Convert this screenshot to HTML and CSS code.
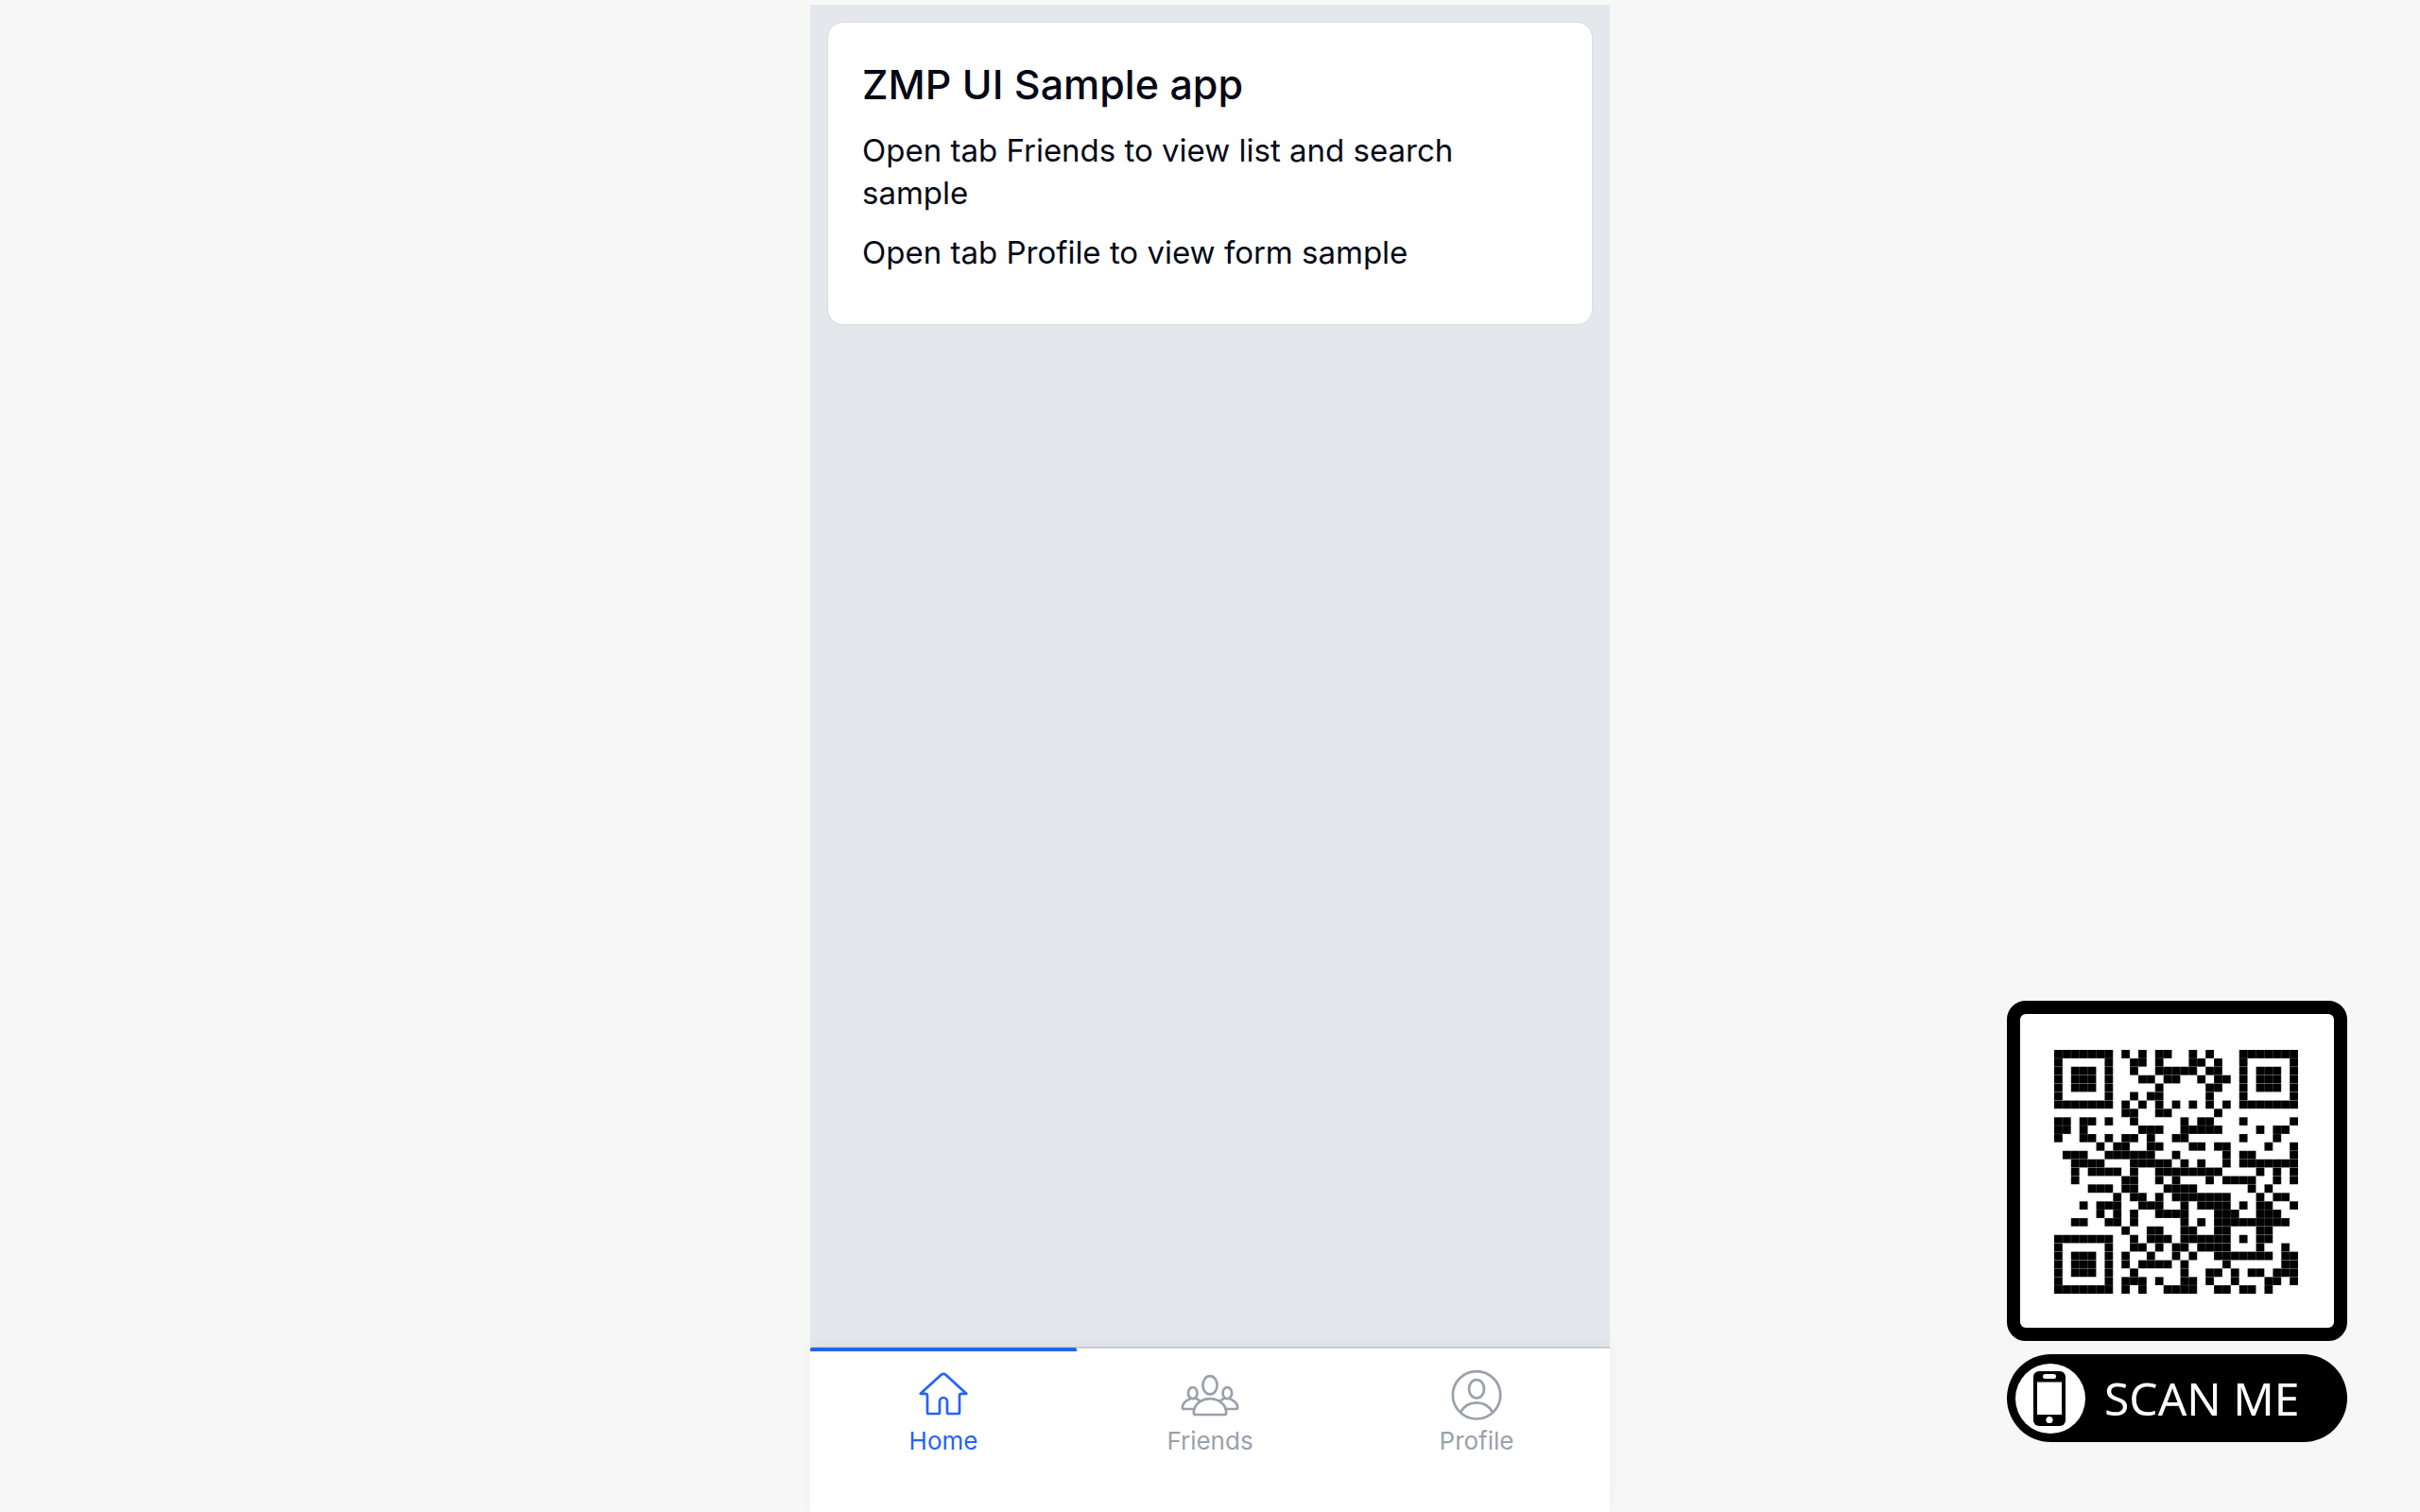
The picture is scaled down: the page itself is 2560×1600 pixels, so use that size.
FILE: index.html
```html
<!DOCTYPE html>
<html lang="en">
<head>
<meta charset="utf-8">
<meta name="viewport" content="width=device-width, initial-scale=1">
<title>ZMP UI Sample app</title>
<link rel="stylesheet" href="styles.css">
</head>
<body>
<div class="app">
  <main class="page">
    <section class="card">
      <h1 class="card-title">ZMP UI Sample app</h1>
      <p class="card-text">Open tab Friends to view list and search sample</p>
      <p class="card-text">Open tab Profile to view form sample</p>
    </section>
  </main>
  <nav class="tabs">
    <a class="tab tab-active" href="#home">
      <svg class="tab-icon" viewBox="0 0 60 60" aria-hidden="true"><path d="M27.6 8.8Q30 6.800 32.400 8.800L54.300 28.800H49Q47 28.800 47 30.800V48.500Q47 50 45.500 50H35.500Q34 50 34 48.500V37A4 4 0 0 0 26 37V48.500Q26 50 24.500 50H14.500Q13 50 13 48.500V30.800Q13 28.800 11 28.800H5.700Z"/></svg>
      <span>Home</span>
    </a>
    <a class="tab" href="#friends">
      <svg class="tab-icon" viewBox="0 0 60 60" aria-hidden="true"><ellipse cx="30" cy="19.8" rx="7.6" ry="9.6"/><path d="M12.8 49C12.8 41 20 34.2 30 34.2S47.2 41 47.2 49Q47.2 51 45.4 51H14.6Q12.8 51 12.8 49Z"/><ellipse cx="11.7" cy="28.2" rx="4.8" ry="6"/><ellipse cx="48.3" cy="28.2" rx="4.8" ry="6"/><path d="M8.5 34.5C4 36 .8 40 .8 43.2Q.8 45 2.6 45H13.5M14.5 33.5L18.5 35.8M51.5 34.5C56 36 59.2 40 59.2 43.2Q59.2 45 57.4 45H46.5M45.5 33.5L41.5 35.8"/></svg>
      <span>Friends</span>
    </a>
    <a class="tab" href="#profile">
      <svg class="tab-icon" viewBox="0 0 60 60" aria-hidden="true"><circle cx="30" cy="30.3" r="25.2"/><ellipse cx="30" cy="23.8" rx="8" ry="9.7"/><path d="M13.3 48C17 41.5 23 38.3 30 38.3S43 41.5 46.7 48"/></svg>
      <span>Profile</span>
    </a>
  </nav>
</div>

<aside class="scan">
  <div class="qr-frame">
    <svg class="qr" viewBox="0 0 29 29" role="img" aria-label="QR code">
      <g class="qr-modules" transform="translate(0 .5)">
        <path d="M0 0h7M8 0h1M10 0h1M12 0h2M16 0h1M18 0h1M22 0h7"/>
        <path d="M0 1h1M6 1h1M9 1h2M12 1h1M16 1h2M19 1h1M22 1h1M28 1h1"/>
        <path d="M0 2h1M2 2h3M6 2h1M9 2h1M12 2h5M18 2h2M22 2h1M24 2h3M28 2h1"/>
        <path d="M0 3h1M2 3h3M6 3h1M10 3h2M13 3h2M17 3h1M19 3h2M22 3h1M24 3h3M28 3h1"/>
        <path d="M0 4h1M2 4h3M6 4h1M12 4h1M18 4h2M22 4h1M24 4h3M28 4h1"/>
        <path d="M0 5h1M6 5h1M9 5h1M11 5h2M18 5h1M22 5h1M28 5h1"/>
        <path d="M0 6h7M8 6h1M10 6h1M12 6h1M14 6h1M16 6h1M18 6h1M20 6h1M22 6h7"/>
        <path d="M8 7h2M12 7h2M19 7h1"/>
        <path d="M0 8h2M3 8h2M6 8h1M9 8h1M15 8h1M17 8h2M22 8h1M28 8h1"/>
        <path d="M0 9h2M3 9h1M10 9h3M15 9h5M24 9h1M26 9h2"/>
        <path d="M0 10h1M3 10h2M6 10h1M8 10h2M11 10h1M14 10h2M22 10h1M26 10h1"/>
        <path d="M5 11h1M7 11h2M11 11h2M16 11h2M19 11h2M25 11h1M28 11h1"/>
        <path d="M1 12h3M6 12h6M14 12h1M20 12h1M22 12h2M28 12h1"/>
        <path d="M2 13h4M9 13h5M15 13h1M17 13h1M20 13h1M22 13h7"/>
        <path d="M2 14h1M4 14h4M9 14h1M12 14h8M24 14h1M26 14h1M28 14h1"/>
        <path d="M2 15h1M8 15h2M12 15h1M14 15h1M18 15h1M20 15h4M26 15h1M28 15h1"/>
        <path d="M4 16h3M8 16h2M13 16h4M23 16h1M25 16h1"/>
        <path d="M7 17h1M9 17h2M12 17h1M14 17h7M24 17h1M26 17h2"/>
        <path d="M3 18h1M5 18h3M10 18h3M15 18h1M17 18h4M22 18h1M24 18h2M28 18h1"/>
        <path d="M5 19h1M7 19h1M9 19h1M12 19h4M19 19h3M24 19h3"/>
        <path d="M2 20h2M6 20h2M9 20h1M15 20h1M17 20h1M19 20h9"/>
        <path d="M8 21h1M11 21h2M15 21h2M19 21h2M24 21h2"/>
        <path d="M0 22h7M9 22h1M11 22h3M15 22h6M22 22h1M24 22h2"/>
        <path d="M0 23h1M6 23h1M9 23h2M12 23h1M14 23h2M17 23h4M24 23h1M27 23h1"/>
        <path d="M0 24h1M2 24h3M6 24h1M8 24h1M11 24h1M14 24h1M16 24h1M19 24h7M27 24h2"/>
        <path d="M0 25h1M2 25h3M6 25h1M8 25h1M10 25h4M15 25h1M20 25h1M27 25h2"/>
        <path d="M0 26h1M2 26h3M6 26h1M9 26h1M15 26h1M18 26h2M21 26h1M23 26h2M26 26h3"/>
        <path d="M0 27h1M6 27h1M8 27h3M12 27h1M15 27h2M18 27h1M21 27h1M25 27h2M28 27h1"/>
        <path d="M0 28h7M8 28h1M10 28h1M13 28h4M19 28h2M22 28h2M25 28h1"/>
      </g>
      <path class="qr-grid" d="M1 0v29M2 0v29M3 0v29M4 0v29M5 0v29M6 0v29M7 0v29M8 0v29M9 0v29M10 0v29M11 0v29M12 0v29M13 0v29M14 0v29M15 0v29M16 0v29M17 0v29M18 0v29M19 0v29M20 0v29M21 0v29M22 0v29M23 0v29M24 0v29M25 0v29M26 0v29M27 0v29M28 0v29M0 1h29M0 2h29M0 3h29M0 4h29M0 5h29M0 6h29M0 7h29M0 8h29M0 9h29M0 10h29M0 11h29M0 12h29M0 13h29M0 14h29M0 15h29M0 16h29M0 17h29M0 18h29M0 19h29M0 20h29M0 21h29M0 22h29M0 23h29M0 24h29M0 25h29M0 26h29M0 27h29M0 28h29"/>
    </svg>
  </div>
  <div class="scan-label">
    <svg class="scan-phone" viewBox="0 0 74 74" aria-hidden="true"><circle cx="37" cy="37" r="37" fill="#fff"/><rect x="19" y="8" width="34" height="58" rx="6"/><rect x="29" y="11" width="14" height="5" rx="2.5" fill="#fff"/><rect x="23" y="19.500" width="26" height="34.500" fill="#fff"/><circle cx="36" cy="59.500" r="3.600" fill="#fff"/></svg>
    <span>SCAN ME</span>
  </div>
</aside>
</body>
</html>
```
FILE: styles.css
```css
* {
  box-sizing: border-box;
}

body {
  margin: 0;
  background: #f7f7f7;
  color: #050816;
  font-family: Inter, "Liberation Sans", sans-serif;
}

.app {
  display: flex;
  flex-direction: column;
  width: 100%;
  max-width: 846px;
  min-height: 100vh;
  margin: 0 auto;
  border-top: 5px solid #f9f9f9;
  background: #e4e7ec;
}

.page {
  flex: 1;
  padding: 18px;
}

.card {
  padding: 41px 36px 53px;
  border: 1px solid #d9dce1;
  border-radius: 17px;
  background: #fff;
}

.card-title {
  margin: 0 0 6px;
  font-size: 43px;
  line-height: 48px;
  font-weight: 500;
}

.card-text {
  margin: 0;
  padding-top: 18px;
  font-size: 33px;
  line-height: 45px;
}

.tabs {
  display: grid;
  grid-template-columns: repeat(3, 1fr);
  height: 175px;
  border-top: 2px solid #c9ccd1;
  background: #fff;
  box-shadow: 0 -4px 16px rgba(0, 0, 0, 0.04);
}

.tab {
  display: flex;
  flex-direction: column;
  align-items: center;
  padding-top: 19px;
  color: #9aa1ab;
  font-size: 26px;
  line-height: 38px;
  text-decoration: none;
}

.tab-active {
  margin-top: -1px;
  padding-top: 16px;
  border-top: 4px solid #2563eb;
  border-radius: 2px 2px 0 0;
  color: #2563f5;
}

.tab-icon {
  width: 60px;
  height: 60px;
  overflow: visible;
  fill: none;
  stroke: currentColor;
  stroke-width: 2.7;
  stroke-linecap: round;
  stroke-linejoin: round;
}

.scan {
  position: fixed;
  right: 77px;
  bottom: 74px;
  display: flex;
  flex-direction: column;
  gap: 14px;
  width: 360px;
}

.qr-frame {
  padding: 38px 38px 36px 36px;
  border: 14px solid #000;
  border-radius: 20px;
  background: #fff;
}

.qr {
  display: block;
  width: 100%;
}

.qr-modules {
  stroke: #000;
}

.qr-grid {
  stroke: #fff;
  stroke-opacity: 0.2;
  stroke-width: 0.1;
}

.scan-label {
  display: flex;
  align-items: center;
  gap: 20px;
  height: 93px;
  padding-left: 9px;
  border-radius: 47px;
  background: #000;
  color: #fff;
  font-family: "Noto Sans", "Open Sans", sans-serif;
  font-size: 48px;
  line-height: 60px;
}

.scan-phone {
  width: 74px;
  height: 74px;
}
```
